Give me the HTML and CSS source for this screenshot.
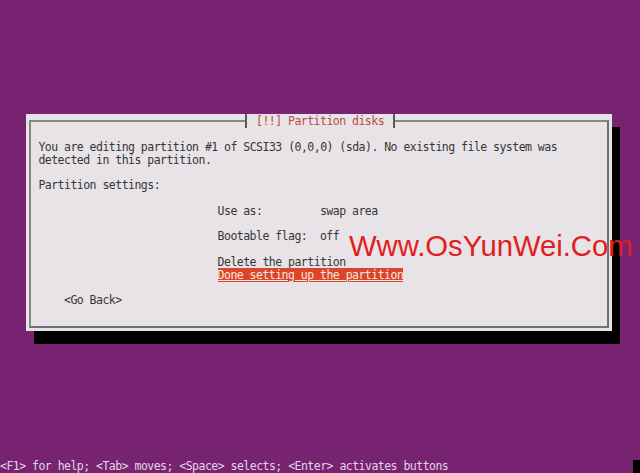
FILE: index.html
```html
<!DOCTYPE html>
<html>
<head>
<meta charset="utf-8">
<link rel="stylesheet" href="styles.css">
</head>
<body>
<main class="screen">
  <section class="dialog">
    <fieldset class="frame">
      <legend class="title">[!!] Partition disks</legend>
      <div class="row">You are editing partition #1 of SCSI33 (0,0,0) (sda). No existing file system was</div>
      <div class="row">detected in this partition.</div>
      <div class="row blank"></div>
      <div class="row">Partition settings:</div>
      <div class="row blank"></div>
      <div class="settings">
        <div class="row setting"><span class="label">Use as:</span><span class="value">swap area</span></div>
        <div class="row blank"></div>
        <div class="row setting"><span class="label">Bootable flag:</span><span class="value">off</span></div>
        <div class="row blank"></div>
        <div class="row">Delete the partition</div>
        <div class="row"><span class="selected">Done setting up the partition</span></div>
      </div>
      <div class="row blank"></div>
      <div class="row back">&lt;Go Back&gt;</div>
    </fieldset>
  </section>
  <footer class="help">
    <span class="help-text">&lt;F1&gt; for help; &lt;Tab&gt; moves; &lt;Space&gt; selects; &lt;Enter&gt; activates buttons</span>
    <span class="cursor"></span>
  </footer>
  <div class="watermark">Www.OsYunWei.Com</div>
</main>
</body>
</html>
```

FILE: styles.css
```css
html, body {
  margin: 0;
  padding: 0;
}

body {
  width: 640px;
  height: 473px;
  overflow: hidden;
  background: #772372;
}

.screen {
  position: relative;
  width: 640px;
  height: 473px;
  display: flex;
  flex-direction: column;
  font-family: "DejaVu Sans Mono", monospace;
  font-size: 11.5px;
  letter-spacing: -0.52px;
  color: #363636;
}

.dialog {
  box-sizing: border-box;
  margin: 114px 0 0 26px;
  width: 586px;
  height: 217px;
  padding: 0 3px 3px 3px;
  background: #e7e3e6;
  box-shadow: 8px 13px 0 0 #000;
}

.frame {
  box-sizing: border-box;
  margin: 0;
  height: 214px;
  min-width: 0;
  padding: 12.8px 0 0 7.4px;
  border: 2px solid;
  border-color: #868686 #707070 #707070 #868686;
}

.title {
  margin-left: 207.1px;
  padding: 0 8.7px 0 8.5px;
  height: 14px;
  line-height: 14px;
  border-left: 2px solid #5a5a5a;
  border-right: 2px solid #5a5a5a;
  color: #b94a4a;
}

.row {
  height: 12.8px;
  line-height: 12.8px;
  white-space: pre;
}

.settings {
  padding-left: 179.2px;
}

.setting {
  display: grid;
  grid-template-columns: 102.4px auto;
}

.selected {
  background: #d9462c;
  color: #f6e6e2;
  text-decoration: underline;
  text-underline-offset: 1px;
}

.back {
  padding-left: 25.6px;
}

.help {
  margin-top: auto;
  height: 13px;
  line-height: 12.8px;
  display: flex;
  align-items: flex-start;
  color: #e4d6e4;
  white-space: pre;
}

.cursor {
  display: block;
  flex: 0 0 7px;
  margin-left: auto;
  height: 13px;
  background: #000;
}

.watermark {
  position: absolute;
  left: 349px;
  top: 231px;
  font-family: "Liberation Sans", Arial, sans-serif;
  font-size: 29.3px;
  line-height: 29.3px;
  letter-spacing: -0.05px;
  color: #e0201e;
}
```
